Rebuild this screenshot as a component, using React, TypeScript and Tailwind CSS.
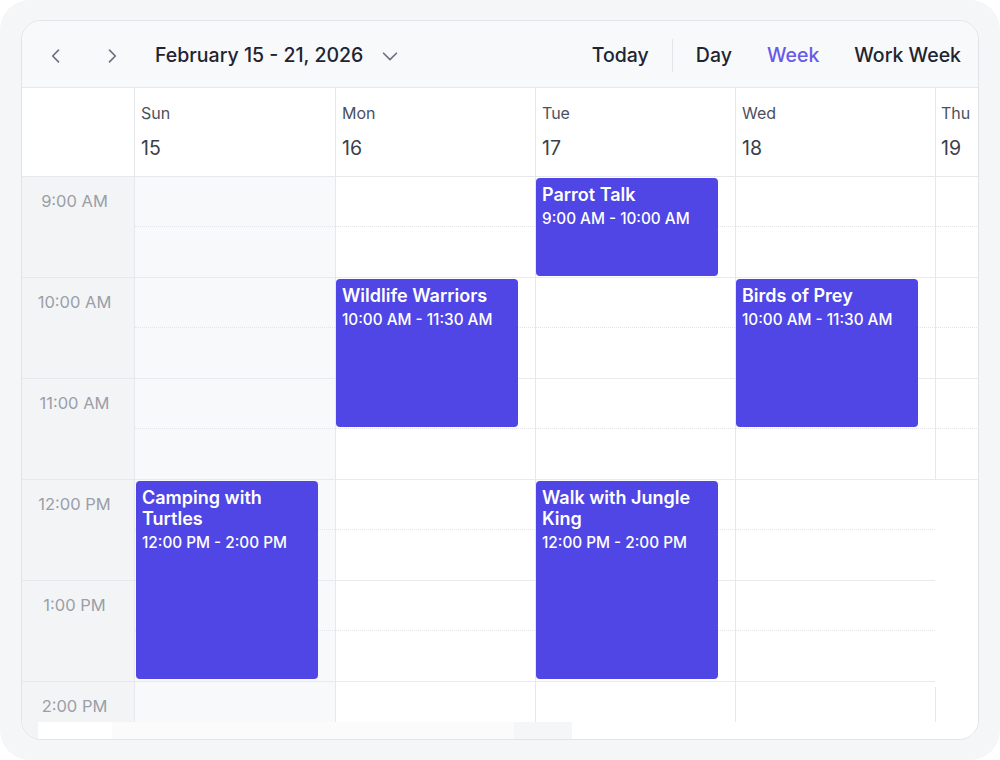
import React from "react";

type Ev = { title: string; time: string; top: number; height: number };

const HOURS = ["9:00 AM", "10:00 AM", "11:00 AM", "12:00 PM", "1:00 PM", "2:00 PM"];

const DAYS: { name: string; date: string; events: Ev[]; width: string; left: string }[] = [
  {
    name: "Sun",
    date: "15",
    width: "w-[201px] bg-[#f8f9fa]",
    left: "left-[1px]",
    events: [{ title: "Camping with Turtles", time: "12:00 PM - 2:00 PM", top: 304, height: 198 }],
  },
  {
    name: "Mon",
    date: "16",
    width: "w-[200px]",
    left: "left-0",
    events: [{ title: "Wildlife Warriors", time: "10:00 AM - 11:30 AM", top: 102, height: 148 }],
  },
  {
    name: "Tue",
    date: "17",
    width: "w-[200px]",
    left: "left-0",
    events: [
      { title: "Parrot Talk", time: "9:00 AM - 10:00 AM", top: 1, height: 98 },
      { title: "Walk with Jungle King", time: "12:00 PM - 2:00 PM", top: 304, height: 198 },
    ],
  },
  {
    name: "Wed",
    date: "18",
    width: "w-[199px]",
    left: "left-0",
    events: [{ title: "Birds of Prey", time: "10:00 AM - 11:30 AM", top: 102, height: 148 }],
  },
];

function ChevronLeft() {
  return (
    <svg width="20" height="20" viewBox="0 0 24 24" fill="none" stroke="#6b7280" strokeWidth="2" strokeLinecap="round" strokeLinejoin="round">
      <path d="M15 5l-7 7 7 7" />
    </svg>
  );
}

function ChevronRight() {
  return (
    <svg width="20" height="20" viewBox="0 0 24 24" fill="none" stroke="#6b7280" strokeWidth="2" strokeLinecap="round" strokeLinejoin="round">
      <path d="M9 5l7 7-7 7" />
    </svg>
  );
}

function ChevronDown() {
  return (
    <svg width="22" height="22" viewBox="0 0 24 24" fill="none" stroke="#6b7280" strokeWidth="1.8" strokeLinecap="round" strokeLinejoin="round">
      <path d="M5 9l7 7 7-7" />
    </svg>
  );
}

function HourCell({ last }: { last?: boolean }) {
  return (
    <div className={`flex h-[101px] flex-col ${last ? "" : "border-b border-[#e8eaed]"}`}>
      <div className="h-[50px] border-b border-dotted border-[#e3e5e8]" />
      <div className="flex-1" />
    </div>
  );
}

function EventCard({ ev, left }: { ev: Ev; left: string }) {
  return (
    <div
      className={`absolute ${left} w-[182px] rounded-[4px] bg-[#4f46e5] px-[6px] pt-[6px] text-white`}
      style={{ top: ev.top, height: ev.height }}
    >
      <div className="text-[18px] font-semibold leading-[21px]">{ev.title}</div>
      <div className="mt-[5px] text-[15.3px] font-medium leading-[18px]">{ev.time}</div>
    </div>
  );
}

export default function App() {
  return (
    <div className="h-[760px] w-[1000px] bg-white" style={{ fontFamily: "Inter, 'Noto Sans', sans-serif" }}>
      <div className="flex h-full w-full rounded-[30px] bg-[#f5f6f7] px-[21px] pt-[20px] pb-[20px]">
        <div className="flex flex-1 flex-col overflow-hidden rounded-[20px] border border-[#e2e4e7] bg-white">
          {/* toolbar */}
          <div className="flex h-[67px] shrink-0 items-center border-b border-[#e6e8eb] bg-[#f8f9fb] pl-[24px] pr-[17px] pt-[3px] whitespace-nowrap">
            <div className="flex h-[32px] w-[20px] items-center justify-center"><ChevronLeft /></div>
            <div className="ml-[36px] flex h-[32px] w-[20px] items-center justify-center"><ChevronRight /></div>
            <div className="ml-[33px] text-[19.5px] font-medium text-[#1f2430]">February 15 - 21, 2026</div>
            <div className="ml-[16px] flex items-center"><ChevronDown /></div>
            <div className="flex-1" />
            <div className="text-[19.5px] font-medium text-[#1f2430]">Today</div>
            <div className="mx-[23px] h-[33px] w-px bg-[#e3e5e8]" />
            <div className="flex items-center gap-[35px] text-[19.5px] font-medium">
              <span className="text-[#1f2430]">Day</span>
              <span className="text-[#6a5ae6]">Week</span>
              <span className="text-[#1f2430]">Work Week</span>
            </div>
          </div>

          {/* day header */}
          <div className="flex h-[89px] shrink-0 border-b border-[#e6e8eb]">
            <div className="w-[113px] shrink-0 border-r border-[#e6e8eb]" />
            {DAYS.map((d, i) => (
              <div
                key={d.name}
                className={`${d.width} bg-white shrink-0 pl-[6px] pt-[15px] ${i < 3 ? "border-r border-[#e6e8eb]" : ""}`}
              >
                <div className="text-[16px] leading-[20px] text-[#4b5060]">{d.name}</div>
                <div className="mt-[14px] text-[19.5px] leading-[22px] text-[#3a3f4b]">{d.date}</div>
              </div>
            ))}
            <div className="w-[200px] shrink-0 border-l border-[#e6e8eb] pl-[5px] pt-[15px]">
              <div className="text-[16px] leading-[20px] text-[#4b5060]">Thu</div>
              <div className="mt-[14px] text-[19.5px] leading-[22px] text-[#3a3f4b]">19</div>
            </div>
          </div>

          {/* time grid */}
          <div className="flex h-[545px] shrink-0 overflow-hidden">
            <div className="w-[113px] shrink-0 border-r border-[#e6e8eb] bg-[#f3f4f6]">
              {HOURS.map((h, i) => (
                <div
                  key={h}
                  className={`h-[101px] pr-[7px] pt-[14px] text-center text-[16.5px] leading-[20px] text-[#9a9fa8] ${i < HOURS.length - 1 ? "border-b border-[#e6e8eb]" : ""}`}
                >
                  {h}
                </div>
              ))}
            </div>
            {DAYS.map((d, i) => (
              <div
                key={d.name}
                className={`relative ${d.width} shrink-0 ${i < 3 ? "border-r border-[#e6e8eb]" : ""}`}
              >
                {HOURS.map((h, j) => (
                  <HourCell key={h} last={j === HOURS.length - 1} />
                ))}
                {d.events.map((ev) => (
                  <EventCard key={ev.title} ev={ev} left={d.left} />
                ))}
              </div>
            ))}
            <div className="flex w-[200px] shrink-0 flex-col">
              <div className="border-l border-[#e6e8eb]">
                {HOURS.slice(0, 3).map((h) => (
                  <HourCell key={h} />
                ))}
              </div>
              <div className="h-[207px]" />
              <div className="flex-1 border-l border-[#e6e8eb]" />
            </div>
          </div>

          {/* bottom scroll strip */}
          <div className="flex flex-1">
            <div className="w-[16px] bg-[#f3f4f6]" />
            <div className="w-[74px] bg-white" />
            <div className="w-[402px] bg-[#fbfbfc]" />
            <div className="w-[58px] bg-[#f4f6f8]" />
            <div className="flex-1 bg-white" />
          </div>
        </div>
      </div>
    </div>
  );
}
